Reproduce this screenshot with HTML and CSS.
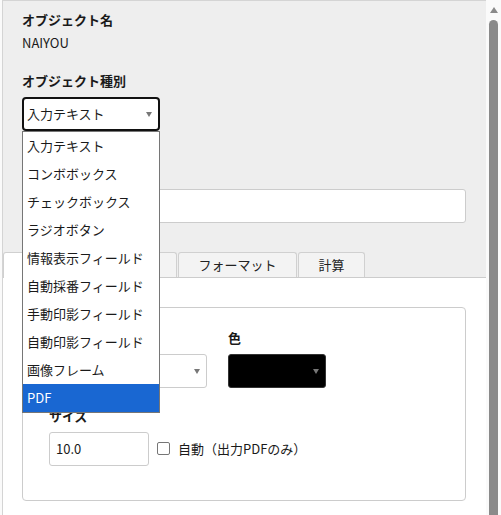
FILE: index.html
```html
<!DOCTYPE html>
<html lang="ja">
<head>
<meta charset="utf-8">
<title>オブジェクト設定</title>
<link rel="stylesheet" href="styles.css">
</head>
<body>
<div class="page">
  <div class="top">
    <div class="label">オブジェクト名</div>
    <div class="value">NAIYOU</div>
    <div class="label label-gap">オブジェクト種別</div>
    <div class="select select-focus">
      <span class="select-text">入力テキスト</span>
      <span class="arrow"></span>
    </div>
    <div class="label label-gap2"></div>
    <div class="textbox"></div>
  </div>
  <div class="tabs">
    <div class="tab tab-active tab1"></div>
    <div class="tab tab2"></div>
    <div class="tab tab3">フォーマット</div>
    <div class="tab tab4">計算</div>
  </div>
  <div class="tab-body">
    <div class="box">
      <div class="row">
        <div class="col col-font">
          <div class="label"></div>
          <div class="select select-font"><span class="select-text"></span><span class="arrow"></span></div>
        </div>
        <div class="col">
          <div class="label">色</div>
          <div class="select select-color"><span class="arrow"></span></div>
        </div>
      </div>
      <div class="label label-size">サイズ</div>
      <div class="size-row">
        <div class="size-input">10.0</div>
        <span class="checkbox"></span>
        <span class="check-label">自動（出力PDFのみ）</span>
      </div>
    </div>
  </div>

  <ul class="dropdown">
    <li>入力テキスト</li>
    <li>コンボボックス</li>
    <li>チェックボックス</li>
    <li>ラジオボタン</li>
    <li>情報表示フィールド</li>
    <li>自動採番フィールド</li>
    <li>手動印影フィールド</li>
    <li>自動印影フィールド</li>
    <li>画像フレーム</li>
    <li class="selected">PDF</li>
  </ul>
</div>
<div class="scrollbar">
  <div class="sb-arrow"></div>
  <div class="sb-thumb"></div>
</div>
</body>
</html>
```
FILE: styles.css
```css
html, body {
  margin: 0;
  padding: 0;
  height: 515px;
  overflow: hidden;
  background: #fafafa;
}
body {
  display: flex;
  font-family: "Noto Sans CJK JP", "Noto Sans", sans-serif;
  font-size: 13px;
  color: #1a1a1a;
}
.page {
  position: relative;
  flex: 1;
  margin-left: 2px;
  border-top: 1px solid #d4d4d4;
  border-left: 1px solid #d4d4d4;
  background: #fff;
  display: flex;
  flex-direction: column;
}
.top {
  background: #eeeeee;
  padding: 10px 20px 29px 19px;
}
.label {
  font-weight: bold;
  line-height: 18px;
  height: 18px;
}
.value {
  margin-top: 5px;
  line-height: 18px;
}
.label-gap { margin-top: 20px; }
.label-gap2 { margin-top: 33px; }
.select {
  margin-top: 7px;
  box-sizing: border-box;
  height: 34px;
  border: 1px solid #cccccc;
  border-radius: 3px;
  background: #fff;
  display: flex;
  align-items: center;
  padding: 0 6px 0 4px;
}
.select-focus {
  width: 138px;
  border: 2px solid #111;
  border-radius: 4px;
  padding-left: 3px;
}
.select-text { flex: 1; line-height: 18px; }
.arrow {
  width: 0;
  height: 0;
  border-left: 3.5px solid transparent;
  border-right: 3.5px solid transparent;
  border-top: 5px solid #777;
  margin-left: auto;
}
.textbox {
  margin-top: 7px;
  box-sizing: border-box;
  height: 34px;
  border: 1px solid #cccccc;
  border-radius: 3px;
  background: #fff;
}
.tabs {
  background: #eeeeee;
  display: flex;
  align-items: flex-end;
  height: 25px;
  border-bottom: 1px solid #cccccc;
}
.tab {
  box-sizing: border-box;
  height: 25px;
  border: 1px solid #d0d0d0;
  border-bottom: none;
  border-radius: 3px 3px 0 0;
  background: #f3f3f3;
  margin-right: 1px;
  text-align: center;
  line-height: 24px;
  color: #222;
}
.tab-active {
  background: #fff;
  height: 26px;
  margin-bottom: -1px;
}
.tab1 { width: 84px; }
.tab2 { width: 89px; }
.tab3 { width: 119px; }
.tab4 { width: 67px; }
.tab-body {
  flex: 1;
  background: #fff;
  padding: 29px 20px 0 19px;
}
.box {
  border: 1px solid #cccccc;
  border-radius: 4px;
  padding: 21px 20px 34px 26px;
}
.row {
  display: flex;
  gap: 21px;
}
.col-font .select { width: 158px; }
.select-color {
  width: 98px;
  background: #000;
  border-color: #333;
}
.label-size { margin-top: 19px; }
.size-row {
  margin-top: 7px;
  display: flex;
  align-items: center;
}
.size-input {
  box-sizing: border-box;
  width: 100px;
  height: 34px;
  border: 1px solid #cccccc;
  border-radius: 3px;
  padding-left: 6px;
  line-height: 32px;
}
.checkbox {
  box-sizing: border-box;
  width: 13px;
  height: 13px;
  border: 1px solid #767676;
  border-radius: 2px;
  background: #fff;
  margin-left: 8px;
  margin-top: -1px;
}
.check-label {
  margin-left: 8px;
  line-height: 18px;
}
.dropdown {
  position: absolute;
  left: 19px;
  top: 130px;
  width: 138px;
  box-sizing: border-box;
  margin: 0;
  padding: 0;
  list-style: none;
  background: #fff;
  border: 1px solid #767676;
}
.dropdown li {
  height: 28px;
  line-height: 27px;
  padding-left: 4px;
  white-space: nowrap;
}
.dropdown li.selected {
  background: #1967d2;
  color: #fff;
}
.scrollbar {
  width: 15px;
  background: #fafafa;
  display: flex;
  flex-direction: column;
  align-items: center;
}
.sb-arrow {
  margin-top: 7px;
  width: 0;
  height: 0;
  border-left: 4.5px solid transparent;
  border-right: 4.5px solid transparent;
  border-bottom: 6px solid #8a8a8a;
}
.sb-thumb {
  margin-top: 7px;
  width: 9px;
  flex: 1;
  background: #8a8a8a;
  border-radius: 5px 5px 0 0;
}
```
